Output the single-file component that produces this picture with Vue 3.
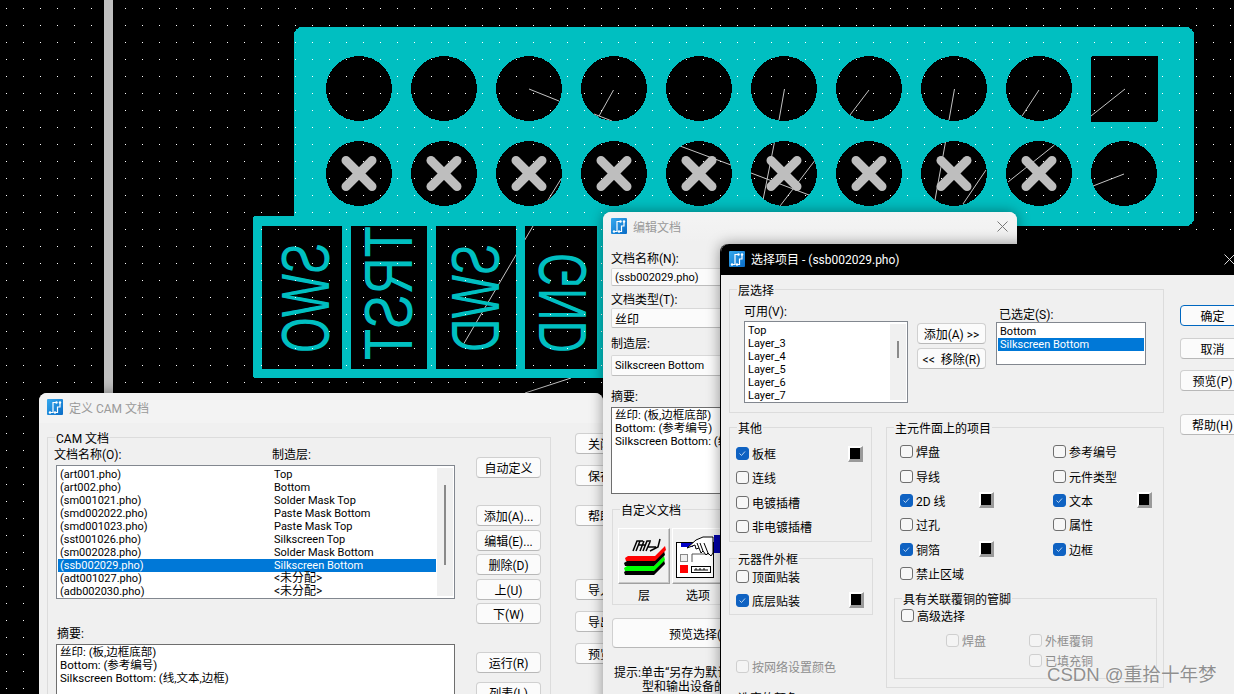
<template>
  <div class="desktop">
    <!-- 共用的 logo -->
    <svg class="defs" width="0" height="0">
      <defs>
        <linearGradient id="logoBg" x1="0" y1="0" x2="1" y2="1">
          <stop offset="0" stop-color="#35a9ee" />
          <stop offset="1" stop-color="#0a6cc6" />
        </linearGradient>
        <symbol id="logo" viewBox="0 0 16 16">
          <rect width="16" height="16" rx="1" fill="url(#logoBg)" />
          <path d="M3 13.5H6V3.5H9M8 13.5H10.5V8H13V4" fill="none" stroke="#fff" stroke-width="1.2" />
          <circle cx="9.5" cy="3.5" r="1.2" fill="#fff" />
          <circle cx="13" cy="3.5" r="1.2" fill="#fff" />
          <circle cx="3" cy="13.5" r="1.2" fill="#fff" />
          <circle cx="8" cy="13.5" r="1.2" fill="#fff" />
        </symbol>
      </defs>
    </svg>

    <!-- PCB 画布 -->
    <svg class="board" width="1234" height="694" viewBox="0 0 1234 694">
      <defs>
        <pattern id="grid" width="17" height="17" patternUnits="userSpaceOnUse">
          <rect x="6" y="8" width="1" height="1" fill="#fff" />
        </pattern>
      </defs>
      <line v-for="(l, i) in ratsnest" :key="i" :x1="l[0]" :y1="l[1]" :x2="l[2]" :y2="l[3]" stroke="#c4c4c4" stroke-width="1" />
      <path :d="boardPath" fill="#00bfc1" fill-rule="evenodd" shape-rendering="crispEdges" />
      <path :d="framePath" fill="#00bfc1" fill-rule="evenodd" shape-rendering="crispEdges" />
      <text v-for="s in silk" :key="s.t" class="silk" :transform="`matrix(0 1 1 0 ${s.x} ${s.y})`" :textLength="s.len" lengthAdjust="spacingAndGlyphs">{{ s.t }}</text>
      <rect width="1234" height="694" fill="url(#grid)" shape-rendering="crispEdges" />
      <g v-for="x in crossCols" :key="x" :transform="`translate(${x} 173.5)`" stroke="#bebebe" stroke-width="9" stroke-linecap="round">
        <line x1="-13" y1="-13" x2="13" y2="13" />
        <line x1="-13" y1="13" x2="13" y2="-13" />
      </g>
      <rect x="104" y="0" width="9" height="694" fill="#c0c0c0" />
    </svg>

    <!-- 定义 CAM 文档 -->
    <div class="win cam">
      <div class="title inactive">
        <svg class="logo"><use href="#logo" /></svg>
        <span>定义 CAM 文档</span>
      </div>
      <div class="cam-body">
        <div class="group cam-group">
          <span class="legend">CAM 文档</span>
          <div class="cam-left">
            <div class="cam-heads"><span>文档名称(O):</span><span>制造层:</span></div>
            <div class="list cam-list">
              <div class="rows">
                <div v-for="r in camRows" :key="r.name" class="row cam-row" :class="{ sel: r.name === '(ssb002029.pho)' }">
                  <span>{{ r.name }}</span>
                  <span :class="{ cjk: r.layer === '<未分配>' }">{{ r.layer }}</span>
                </div>
              </div>
              <div class="scroll"><i class="thumb cam-thumb"></i></div>
            </div>
            <div class="cam-sum-label">摘要:</div>
            <div class="memo cam-memo">
              <div>丝印: (板,边框底部)</div>
              <div>Bottom: (参考编号)</div>
              <div>Silkscreen Bottom: (线,文本,边框)</div>
            </div>
          </div>
          <div class="cam-actions">
            <button class="btn">自动定义</button>
            <div class="stack">
              <button v-for="b in camActions" :key="b" class="btn">{{ b }}</button>
            </div>
            <button class="btn run">运行(R)</button>
            <button class="btn list-btn">列表(L)</button>
          </div>
        </div>
        <div class="cam-side">
          <button v-for="b in camSide" :key="b.t" class="btn" :class="b.c">{{ b.t }}</button>
        </div>
      </div>
    </div>

    <!-- 编辑文档 -->
    <div class="win edit">
      <div class="title inactive">
        <svg class="logo"><use href="#logo" /></svg>
        <span>编辑文档</span>
        <svg class="close" width="11" height="11" viewBox="0 0 11 11"><path d="M.5.5l10 10M10.5.5l-10 10" stroke="#777" fill="none" /></svg>
      </div>
      <div class="edit-body">
        <div class="lab l1">文档名称(N):</div>
        <div class="field f1"><span class="latin">(ssb002029.pho)</span></div>
        <div class="lab l2">文档类型(T):</div>
        <div class="field f2">丝印</div>
        <div class="lab l3">制造层:</div>
        <div class="field f3"><span class="latin">Silkscreen Bottom</span></div>
        <div class="lab l4">摘要:</div>
        <div class="memo edit-memo">
          <div>丝印: (板,边框底部)</div>
          <div>Bottom: (参考编号)</div>
          <div>Silkscreen Bottom: (线,文本,边框)</div>
        </div>
        <div class="group custom">
          <span class="legend">自定义文档</span>
          <div class="tiles">
            <div class="tile">
              <div class="tile-btn">
                <svg width="50" height="54" viewBox="0 0 50 54">
                  <g v-for="p in layerStack" :key="p.y" :fill="p.c" :transform="`translate(${p.x} ${p.y})`">
                    <polygon points="9,27 36,27 46,17 47,21 36,32 7,32 6,29" />
                  </g>
                  <path d="M14 22L18 12H24M17 22L21 12M21 22L25 12M24 22L28 12H32M27 22L31 13M31 22L39 18L41 10M19 16H26M29 18H37" fill="none" stroke="#000" stroke-width="1.5" />
                </svg>
              </div>
              <span>层</span>
            </div>
            <div class="tile">
              <div class="tile-btn">
                <svg width="50" height="54" viewBox="0 0 50 54">
                  <rect x="3.5" y="13.5" width="37" height="35" fill="#fff" stroke="#000" />
                  <rect x="8" y="14" width="12" height="4" fill="#0000c8" />
                  <rect x="7.5" y="25.5" width="7" height="7" fill="#f0f0f0" stroke="#888" />
                  <path d="M19 33V25H37" fill="none" stroke="#555" />
                  <rect x="7" y="36" width="8" height="8" fill="#f00" />
                  <rect x="18.5" y="37.5" width="19" height="6" fill="#fff" stroke="#000" />
                  <path d="M21 41h14M23 39v2M27 39v2M31 39v2" stroke="#000" fill="none" />
                  <path d="M14 19L23 11L30 8L40 8V24L38 27L35 24L33 26L30 22L28 24L26 19L23 20L22 16Z" fill="#fff" stroke="#000" />
                  <path d="M26 19L24 14M30 22L27 14M35 24L31 14" fill="none" stroke="#000" />
                  <rect x="41" y="6" width="8" height="18" fill="#0000a8" />
                </svg>
              </div>
              <span>选项</span>
            </div>
          </div>
        </div>
        <button class="btn preview">预览选择(V)</button>
        <div class="hint">
          <div>提示:单击“另存为默认”按钮保存文档类</div>
          <div class="hint2">型和输出设备的设置</div>
        </div>
      </div>
    </div>

    <!-- 选择项目 -->
    <div class="win pick">
      <div class="title active">
        <svg class="logo"><use href="#logo" /></svg>
        <span>选择项目 - (ssb002029.pho)</span>
        <svg class="close" width="11" height="11" viewBox="0 0 11 11"><path d="M.5.5l10 10M10.5.5l-10 10" stroke="#ddd" fill="none" /></svg>
      </div>
      <div class="pick-body">
        <div class="pick-main">
          <div class="group layers">
            <span class="legend">层选择</span>
            <div class="col-avail">
              <div class="lab">可用(V):</div>
              <div class="list avail">
                <div class="rows">
                  <div v-for="r in available" :key="r" class="row">{{ r }}</div>
                </div>
                <div class="scroll"><i class="thumb avail-thumb"></i></div>
              </div>
            </div>
            <div class="col-move">
              <button class="btn">添加(A) &gt;&gt;</button>
              <button class="btn">&lt;&lt;&nbsp;&nbsp;移除(R)</button>
            </div>
            <div class="col-chosen">
              <div class="lab">已选定(S):</div>
              <div class="list chosen">
                <div class="rows">
                  <div class="row">Bottom</div>
                  <div class="row sel">Silkscreen Bottom</div>
                </div>
              </div>
            </div>
          </div>
          <div class="lower">
            <div class="lower-left">
              <div class="group other">
                <span class="legend">其他</span>
                <div v-for="c in otherChecks" :key="c.t" class="chk">
                  <span class="box" :class="{ on: c.on }"><svg v-if="c.on" width="13" height="13" viewBox="0 0 13 13"><path d="M3.5 6.5l2 2 3.5-4" fill="none" stroke="#bcd6f2" /></svg></span>
                  <span>{{ c.t }}</span>
                  <i v-if="c.sw" class="swatch"></i>
                </div>
              </div>
              <div class="group outline">
                <span class="legend">元器件外框</span>
                <div v-for="c in outlineChecks" :key="c.t" class="chk">
                  <span class="box" :class="{ on: c.on }"><svg v-if="c.on" width="13" height="13" viewBox="0 0 13 13"><path d="M3.5 6.5l2 2 3.5-4" fill="none" stroke="#bcd6f2" /></svg></span>
                  <span>{{ c.t }}</span>
                  <i v-if="c.sw" class="swatch"></i>
                </div>
              </div>
              <div class="chk net dim">
                <span class="box"></span>
                <span>按网络设置颜色</span>
              </div>
              <div class="lab picked">选定的颜色</div>
            </div>
            <div class="group items">
              <span class="legend">主元件面上的项目</span>
              <div class="item-grid">
                <div v-for="c in itemChecks" :key="c.t" class="chk">
                  <span class="box" :class="{ on: c.on }"><svg v-if="c.on" width="13" height="13" viewBox="0 0 13 13"><path d="M3.5 6.5l2 2 3.5-4" fill="none" stroke="#bcd6f2" /></svg></span>
                  <span>{{ c.t }}</span>
                  <i v-if="c.sw" class="swatch"></i>
                </div>
              </div>
              <div class="group pins">
                <span class="legend">具有关联覆铜的管脚</span>
                <div class="chk adv">
                  <span class="box"></span>
                  <span>高级选择</span>
                </div>
                <div class="pin-grid dim">
                  <div class="chk"><span class="box"></span><span>焊盘</span></div>
                  <div class="chk"><span class="box"></span><span>外框覆铜</span></div>
                  <div class="chk second"><span class="box"></span><span>已填充铜</span></div>
                </div>
              </div>
            </div>
          </div>
        </div>
        <div class="pick-side">
          <button class="btn primary">确定</button>
          <button class="btn b2">取消</button>
          <button class="btn b3">预览(P)</button>
          <button class="btn b4">帮助(H)</button>
        </div>
      </div>
    </div>

    <div class="mark">CSDN @重拾十年梦</div>
  </div>
</template>

<script setup>
// 第一行焊盘、第二行焊盘的中心
const cols = [359, 444, 529, 614, 699, 784, 869, 954, 1039];
const circle = (x, y) => `M${x - 33} ${y}a33 32.5 0 1 0 66 0a33 32.5 0 1 0 -66 0Z`;

const boardPath = [
  'M302 27H1186a8 8 0 0 1 8 8V218a8 8 0 0 1 -8 8H302a8 8 0 0 1 -8 -8V35a8 8 0 0 1 8 -8Z',
  ...cols.map((x) => circle(x, 88.5)),
  ...cols.map((x) => circle(x, 173.5)),
  circle(1124, 173.5),
  'M1093 56H1156a2 2 0 0 1 2 2V120a2 2 0 0 1 -2 2H1093a2 2 0 0 1 -2 -2V58a2 2 0 0 1 2 -2Z',
].join('');

const framePath = [
  'M256 216H640V378H256a3 3 0 0 1 -3 -3V219a3 3 0 0 1 3 -3Z',
  'M262 226H342V369H262Z',
  'M351 226H427V369H351Z',
  'M436 226H516V369H436Z',
  'M525 226H597V369H525Z',
].join('');

const crossCols = cols;

// 飞线，只有孔里露出来
const ratsnest = [
  [529, 89, 559, 101],
  [613.5, 90, 599, 116],
  [594, 114, 612, 121],
  [784.5, 89, 779, 120],
  [869, 90, 850, 115],
  [954.5, 89, 949, 120],
  [1039, 90, 1022, 116],
  [1125, 89, 1091, 116],
  [561, 179, 548, 200],
  [680, 146, 731, 165],
  [774.5, 142, 763, 200],
  [751, 173, 809, 195],
  [814.5, 161, 780, 206],
  [945.5, 142, 935, 200],
  [986, 170, 963, 204],
  [1054.5, 145, 1008, 182],
  [1124, 174, 1093, 186],
  [533, 226, 463, 345],
  [571, 378, 525, 393],
];

const silk = [
  { t: 'SWO', x: 329, y: 243, len: 110 },
  { t: 'TRST', x: 412, y: 226, len: 134 },
  { t: 'SWD', x: 499, y: 244, len: 108 },
  { t: 'GND', x: 586, y: 253, len: 100 },
];

const camRows = [
  { name: '(art001.pho)', layer: 'Top' },
  { name: '(art002.pho)', layer: 'Bottom' },
  { name: '(sm001021.pho)', layer: 'Solder Mask Top' },
  { name: '(smd002022.pho)', layer: 'Paste Mask Bottom' },
  { name: '(smd001023.pho)', layer: 'Paste Mask Top' },
  { name: '(sst001026.pho)', layer: 'Silkscreen Top' },
  { name: '(sm002028.pho)', layer: 'Solder Mask Bottom' },
  { name: '(ssb002029.pho)', layer: 'Silkscreen Bottom' },
  { name: '(adt001027.pho)', layer: '<未分配>' },
  { name: '(adb002030.pho)', layer: '<未分配>' },
];

const camActions = ['添加(A)...', '编辑(E)...', '删除(D)', '上(U)', '下(W)'];
const camSide = [
  { t: '关闭', c: 's1' },
  { t: '保存', c: 's2' },
  { t: '帮助', c: 's3' },
  { t: '导入', c: 's4' },
  { t: '导出', c: 's5' },
  { t: '预览', c: 's6' },
];

const layerStack = [
  { x: -1, y: 14, c: '#000' },
  { x: -1, y: 10, c: '#00ff00' },
  { x: -1, y: 5, c: '#000' },
  { x: 0, y: 0, c: '#ff0000' },
];

const available = ['Top', 'Layer_3', 'Layer_4', 'Layer_5', 'Layer_6', 'Layer_7'];

const otherChecks = [
  { t: '板框', on: true, sw: true },
  { t: '连线' },
  { t: '电镀插槽' },
  { t: '非电镀插槽' },
];
const outlineChecks = [
  { t: '顶面贴装' },
  { t: '底层贴装', on: true, sw: true },
];
const itemChecks = [
  { t: '焊盘' },
  { t: '参考编号' },
  { t: '导线' },
  { t: '元件类型' },
  { t: '2D 线', on: true, sw: true },
  { t: '文本', on: true, sw: true },
  { t: '过孔' },
  { t: '属性' },
  { t: '铜箔', on: true, sw: true },
  { t: '边框', on: true },
  { t: '禁止区域' },
];
</script>

<style scoped>
.desktop {
  position: relative;
  width: 1234px;
  height: 694px;
  overflow: hidden;
  background: #000;
  font-family: Roboto, "Noto Sans CJK SC", sans-serif;
  font-size: 12px;
  color: #000;
}
.defs {
  position: absolute;
}
.board {
  position: absolute;
  left: 0;
  top: 0;
}
.silk {
  font-family: "Liberation Sans", sans-serif;
  font-size: 68px;
  fill: #00bfc1;
}

/* 窗口 */
.win {
  position: absolute;
  background: #f0f0f0;
  border-radius: 8px 8px 0 0;
  box-shadow: 0 0 14px rgba(0, 0, 0, 0.4);
}
.cam {
  left: 39px;
  top: 393px;
  width: 564px;
  height: 320px;
}
.edit {
  left: 603px;
  top: 212px;
  width: 414px;
  height: 500px;
}
.pick {
  left: 720px;
  top: 244px;
  width: 600px;
  height: 470px;
  border-left: 1px solid #000;
  box-sizing: border-box;
}
.title {
  display: flex;
  align-items: center;
  box-sizing: border-box;
  height: 30px;
  padding: 0 0 2px 8px;
  gap: 6px;
  background: #f3f3f3;
  border-radius: 8px 8px 0 0;
}
.title.inactive {
  color: #9a9a9a;
}
.edit .title {
  background: linear-gradient(#f4f4f4, #f0f0f0);
}
.title.active {
  height: 31px;
  background: #000;
  color: #fff;
}
.logo {
  width: 16px;
  height: 16px;
  flex: none;
}
.close {
  margin-left: auto;
  margin-right: 9px;
}
.pick .close {
  position: absolute;
  left: 503px;
  top: 10px;
  margin: 0;
}

/* 通用控件 */
.btn {
  display: block;
  box-sizing: border-box;
  width: 65px;
  height: 21px;
  padding: 0;
  border: 1px solid #d0d0d0;
  border-bottom-color: #b8b8b8;
  border-radius: 4px;
  background: #fbfbfb;
  font: inherit;
  color: #000;
  text-align: center;
  white-space: nowrap;
}
.group {
  position: relative;
  box-sizing: border-box;
  border: 1px solid #dcdcdc;
}
.legend {
  position: absolute;
  left: 7px;
  top: -6px;
  padding: 0 1px;
  line-height: 14px;
  background: #f0f0f0;
  white-space: nowrap;
}
.lab {
  height: 16px;
  line-height: 16px;
  white-space: nowrap;
}
.list {
  display: flex;
  box-sizing: border-box;
  border: 1px solid #82878f;
  background: #fff;
  font-size: 11px;
  overflow: hidden;
}
.rows {
  flex: 1;
  min-width: 0;
  padding: 2px 1px;
}
.row {
  height: 13px;
  line-height: 13px;
  padding-left: 2px;
  white-space: nowrap;
}
.row.sel {
  background: #0078d7;
  color: #fff;
}
.scroll {
  flex: none;
  width: 16px;
  margin: 2px 1px 2px 0;
  background: #f0f0f0;
}
.thumb {
  display: block;
  width: 2px;
  margin-left: 7px;
  background: #8a8a8a;
}
.memo {
  box-sizing: border-box;
  border: 1px solid #6e6e6e;
  background: #fff;
  font-size: 11.5px;
  line-height: 13px;
  padding: 1px 3px;
  white-space: nowrap;
  overflow: hidden;
}
.cjk {
  font-size: 12px;
}
.latin {
  font-size: 11px;
}

/* 定义 CAM 文档 */
.cam-body {
  display: flex;
  padding: 14px 0 0 8px;
}
.cam-group {
  display: flex;
  flex: none;
  width: 504px;
  height: 300px;
  padding-left: 8px;
}
.cam-left {
  width: 399px;
  flex: none;
  padding-top: 9px;
}
.cam-heads {
  display: flex;
  height: 16px;
  line-height: 16px;
  margin-left: -2px;
}
.cam-heads span:first-child {
  width: 218px;
}
.cam-list {
  height: 134px;
  margin-top: 2px;
}
.cam-row {
  display: flex;
}
.cam-row span:first-child {
  width: 214px;
  flex: none;
}
.cam-thumb {
  height: 80px;
  margin-top: 17px;
}
.cam-sum-label {
  height: 16px;
  line-height: 16px;
  margin-top: 27px;
  margin-left: 1px;
}
.cam-memo {
  height: 80px;
  margin-top: 2px;
}
.cam-actions {
  margin-left: 21px;
  padding-top: 19px;
}
.stack {
  display: flex;
  flex-direction: column;
  gap: 3.5px;
  margin-top: 27px;
}
.run {
  margin-top: 28px;
}
.list-btn {
  margin-top: 9px;
}
.cam-side {
  margin-left: 24px;
  flex: none;
}
.cam-side .btn {
  width: 60px;
  text-align: left;
  padding-left: 12px;
}
.s1 {
  margin-top: -4px;
}
.s2 {
  margin-top: 11px;
}
.s3 {
  margin-top: 19px;
}
.s4 {
  margin-top: 53px;
}
.s5,
.s6 {
  margin-top: 11px;
}

/* 编辑文档 */
.edit-body {
  padding-left: 8px;
}
.field {
  box-sizing: border-box;
  width: 300px;
  padding-left: 3px;
  background: #fbfbfb;
  border: 1px solid #d8d8d8;
  border-bottom-color: #bdbdbd;
  border-radius: 2px;
  display: flex;
  align-items: center;
}
.l1 {
  margin-top: 9px;
}
.f1 {
  margin-top: 1px;
  height: 18px;
}
.l2 {
  margin-top: 6px;
}
.f2 {
  margin-top: 0;
  height: 20px;
}
.l3 {
  margin-top: 8px;
}
.f3 {
  margin-top: 3px;
  height: 21px;
}
.l4 {
  margin-top: 13px;
}
.edit-memo {
  width: 300px;
  height: 87px;
  margin-top: 2px;
}
.custom {
  width: 300px;
  height: 96px;
  margin-top: 15px;
  margin-left: 1px;
  padding: 18px 0 0 5px;
}
.tiles {
  display: flex;
  gap: 2px;
}
.tile {
  width: 52px;
  text-align: center;
  flex: none;
}
.tile span {
  display: block;
  margin-top: 4px;
  line-height: 16px;
}
.tile-btn {
  box-sizing: border-box;
  height: 56px;
  border: 1px solid;
  border-color: #fff #a0a0a0 #a0a0a0 #fff;
  box-shadow: inset -1px -1px 0 #c8c8c8;
  background: #f0f0f0;
  line-height: 0;
}
.preview {
  width: 300px;
  height: 30px;
  margin-top: 13px;
  margin-left: 1px;
  padding-left: 56px;
  text-align: left;
}
.hint {
  width: 106px;
  overflow: hidden;
  margin-top: 18px;
  margin-left: 3px;
  line-height: 14px;
  white-space: nowrap;
}
.hint2 {
  padding-left: 28px;
}

/* 选择项目 */
.pick-body {
  display: flex;
  padding: 14px 0 0 8px;
}
.pick-main {
  width: 435px;
  flex: none;
}
.layers {
  display: flex;
  height: 124px;
  padding-left: 14px;
}
.col-avail {
  padding-top: 14px;
}
.avail {
  width: 164px;
  height: 82px;
  margin-top: 1px;
}
.avail-thumb {
  height: 17px;
  margin-top: 17px;
}
.col-move {
  display: flex;
  flex-direction: column;
  gap: 4px;
  margin-left: 9px;
  padding-top: 33px;
}
.col-move .btn {
  width: 69px;
}
.col-chosen {
  margin-left: 10px;
  padding-top: 17px;
}
.col-chosen .lab {
  padding-left: 3px;
}
.chosen {
  width: 150px;
  height: 43px;
  margin-top: -1px;
}
.lower {
  display: flex;
  gap: 14px;
  margin-top: 14px;
}
.lower-left {
  width: 143px;
  flex: none;
}
.chk {
  display: flex;
  align-items: center;
  gap: 3px;
  height: 24.3px;
  white-space: nowrap;
}
.box {
  display: block;
  box-sizing: border-box;
  width: 13px;
  height: 13px;
  flex: none;
  border: 1px solid #6f6f6f;
  border-radius: 3px;
  background: #f7f7f7;
  line-height: 0;
}
.box svg {
  margin: -1px;
}
.box.on {
  background: #0f62c2;
  border-color: #0f62c2;
}
.swatch {
  display: block;
  box-sizing: content-box;
  width: 10px;
  height: 11px;
  margin-left: auto;
  background: #000;
  border-style: solid;
  border-width: 2px 3px 3px 2px;
  border-color: #fff #9a9a9a #9a9a9a #fff;
}
.other {
  height: 115px;
  padding: 13.5px 8px 0 6px;
}
.outline {
  width: 144px;
  height: 57px;
  margin-top: 16px;
  padding: 5px 8px 0 6px;
}
.net {
  height: 16px;
  margin-top: 43px;
  padding-left: 7px;
}
.dim {
  color: #8e8e8e;
}
.dim .box {
  border-color: #cfcfcf;
  background: #f4f4f4;
}
.picked {
  margin-top: 17px;
  padding-left: 9px;
}
.items {
  width: 278px;
  height: 261px;
  flex: none;
  padding: 11.5px 0 0 13px;
}
.item-grid {
  display: grid;
  grid-template-columns: 153px 99px;
}
.item-grid .chk {
  height: 24.4px;
}
.item-grid .chk:nth-child(odd) {
  padding-right: 59px;
}
.pins {
  width: 263px;
  height: 81px;
  margin-top: 12.5px;
  margin-left: -6px;
  padding: 8px 0 0 6px;
}
.adv {
  height: 16px;
}
.pin-grid {
  display: grid;
  grid-template-columns: 83px 110px;
  padding-left: 45px;
  margin-top: 9px;
}
.pin-grid .chk {
  height: 24px;
  margin-top: -4px;
}
.second {
  grid-column: 2;
}
.pick-side {
  margin-left: 16px;
  padding-top: 16px;
  flex: none;
}
.primary {
  border: 1.5px solid #0067c0;
}
.b2 {
  margin-top: 12px;
}
.b3 {
  margin-top: 11px;
}
.b4 {
  margin-top: 23px;
}

.mark {
  position: absolute;
  left: 1047px;
  top: 664px;
  font-family: "Liberation Sans", "Noto Sans CJK SC", sans-serif;
  font-size: 18.6px;
  line-height: 22px;
  color: rgba(125, 125, 125, 0.85);
  text-shadow: 0 0 2px rgba(255, 255, 255, 0.7);
  white-space: nowrap;
}
</style>

<style>
html,
body {
  margin: 0;
  overflow: hidden;
  background: #000;
}
</style>
